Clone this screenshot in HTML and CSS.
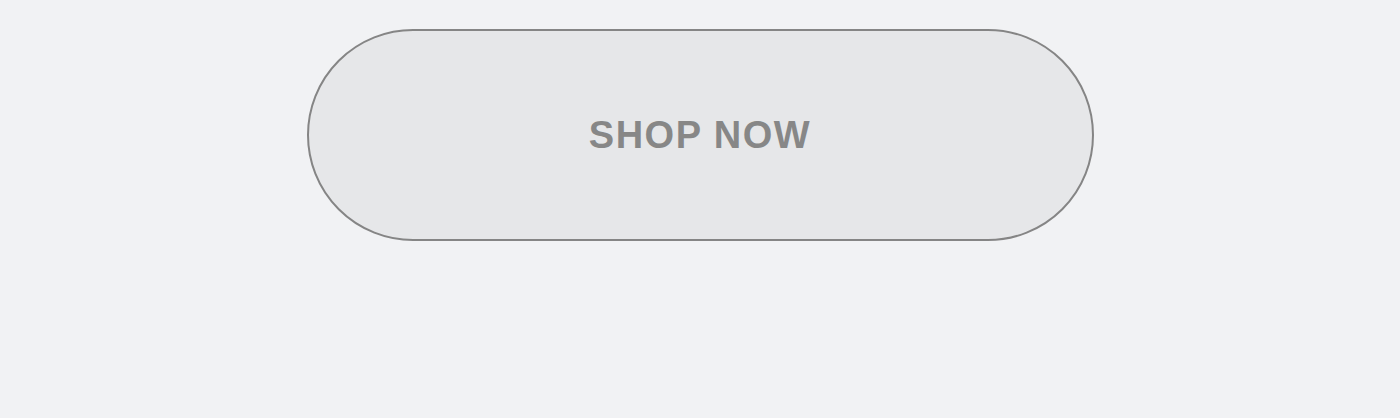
FILE: index.html
```html
<!DOCTYPE html>
<html lang="en">
<head>
    <meta charset="utf-8"/>
    <title>Shop</title>
    <link rel="stylesheet" href="styles.css">
</head>
<body>
<div class="cta-wrap">
    <button class="shop-btn" type="button">SHOP NOW</button>
</div>
</body>
</html>
```

FILE: styles.css
```css
body{
    margin: 0;
    padding: 0;
    background-color: #f1f2f4;
    font-family: "Liberation Sans", Arial, sans-serif;
}

.cta-wrap{
    display: flex;
    justify-content: center;
    padding-top: 29px;
}

.shop-btn {
    width: 787px;
    height: 212px;
    border: 2.5px solid #858585;
    border-radius: 106px;
    background-color: #e6e7e9;
    color: #878787;
    font-family: "Liberation Sans", Arial, sans-serif;
    font-size: 38px;
    font-weight: 700;
    letter-spacing: 1.5px;
    cursor: pointer;
}
```
